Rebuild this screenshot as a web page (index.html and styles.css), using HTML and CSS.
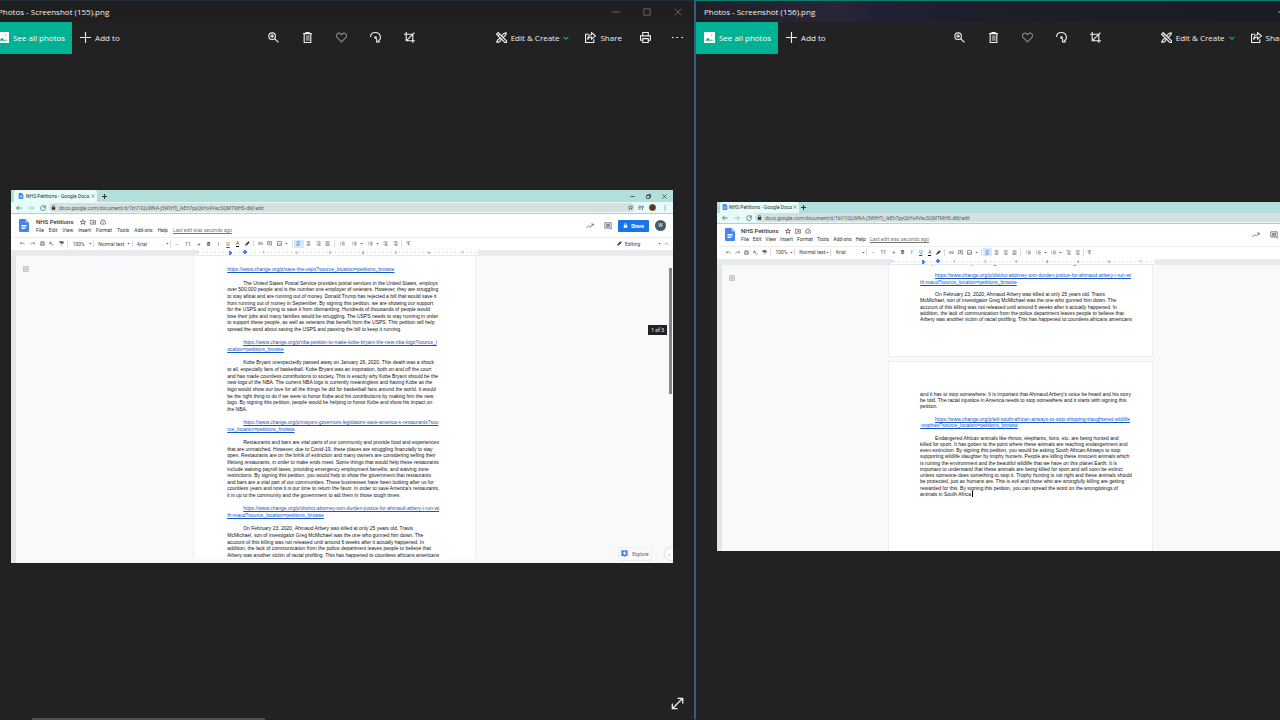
FILE: index.html
```
<!DOCTYPE html>
<html lang="en">
<head>
    <meta charset="UTF-8">
    <meta name="viewport" content="width=device-width, initial-scale=1.0">
    <title>Photos</title>
    <link rel="stylesheet" href="styles.css">
</head>
<body>
    <svg class="sprite" aria-hidden="true">
        <symbol id="picture" viewBox="0 0 20 20"><path fill="#fff" d="M0 1h20v18H0z"/><path fill="#00b294" d="M2 15l5-6 5 5 2-2 4 4v1H2zM12 4h4v4h-4z"/></symbol>
        <symbol id="plus" viewBox="0 0 20 20"><path d="M10 0v20M0 10h20"/></symbol>
        <symbol id="zoom" viewBox="0 0 20 20"><circle cx="7.500" cy="7.500" r="6"/><path d="M12 12l7 7M4 7.500h7M7.500 4v7"/></symbol>
        <symbol id="trash" viewBox="0 0 20 20"><path fill="#888" stroke="none" d="M7 6h7v10H7z"/><path d="M2 3h16M7 3V1h6v2M4 3v16h12V3"/></symbol>
        <symbol id="heart" viewBox="0 0 20 20"><path d="M10 18L2 10C-1 6 2 2 5 2c3 0 4 2 5 3 1-1 2-3 5-3 3 0 6 4 3 8z"/></symbol>
        <symbol id="rotate" viewBox="0 0 20 20"><path d="M1 9C1 4 5 1 10 1c9 0 12 11 5 15M12 12v6h6"/><circle cx="10" cy="10" r="1.500"/></symbol>
        <symbol id="crop" viewBox="0 0 20 20"><path d="M4 0v16h16M0 4h16v16M4 16L19 1"/></symbol>
        <symbol id="edit" viewBox="0 0 20 20"><path d="M1 4l3-3 15 15v3h-3zM4 7l3-3M19 1l-5 2-5 5M12 11l6-6 1-4M8 10l-3 3c-2 0-2 4-4 5 4 1 7 0 7-3l3-3"/></symbol>
        <symbol id="share" viewBox="0 0 20 20"><path d="M7 4H1v15h15v-6M12 1l7 6-7 6V9c-4 0-6 2-7 5 0-6 3-9 7-9z"/></symbol>
        <symbol id="print" viewBox="0 0 20 20"><path d="M5 7V1h10v6M5 15H1V7h18v8h-4M5 12h10v7H5z"/></symbol>
        <symbol id="dots" viewBox="0 0 20 20"><path d="M0 10h3M8 10h3M17 10h3"/></symbol>
        <symbol id="down" viewBox="0 0 20 20"><path d="M2 6l8 8 8-8"/></symbol>
        <symbol id="up" viewBox="0 0 20 20"><path d="M3 14l7-7 7 7"/></symbol>
        <symbol id="min" viewBox="0 0 20 20"><path d="M1 10h18"/></symbol>
        <symbol id="max" viewBox="0 0 20 20"><path d="M2 2h16v16H2z"/></symbol>
        <symbol id="restore" viewBox="0 0 20 20"><path d="M2 6h12v12H2zM6 6V2h12v12h-4"/></symbol>
        <symbol id="close" viewBox="0 0 20 20"><path d="M2 2l16 16M18 2L2 18"/></symbol>
        <symbol id="expand" viewBox="0 0 20 20"><path d="M2 18L18 2M10 2h8v8M2 10v8h8"/></symbol>
        <symbol id="docs" viewBox="0 0 20 26"><path fill="#4285f4" stroke="none" d="M2 0h11l7 7v17q0 2-2 2H2q-2 0-2-2V2q0-2 2-2z"/><path fill="#a1c2fa" stroke="none" d="M13 0l7 7h-7z"/><path stroke="#fff" stroke-width="2" d="M5 13h10M5 16h10M5 19h7"/></symbol>
        <symbol id="back" viewBox="0 0 20 20"><path d="M19 10H2M9 3l-7 7 7 7"/></symbol>
        <symbol id="forward" viewBox="0 0 20 20"><path d="M1 10h17M11 3l7 7-7 7"/></symbol>
        <symbol id="reload" viewBox="0 0 20 20"><path d="M16 5a8 8 0 1 0 2 6M18 1v7h-7"/></symbol>
        <symbol id="lock" viewBox="0 0 20 20"><path fill="currentColor" d="M4 9h12v9H4z"/><path d="M6 9V5a4 4 0 0 1 8 0v4"/></symbol>
        <symbol id="star" viewBox="0 0 20 20"><path d="M10 2l2 6h7l-5 4 2 6-6-4-6 4 2-6-5-4h7z"/></symbol>
        <symbol id="queue" viewBox="0 0 20 20"><path d="M1 4h18M1 9h10M1 14h8M15 17V7h4"/></symbol>
        <symbol id="kebab" viewBox="0 0 20 20"><path d="M10 1v4M10 8v4M10 15v4"/></symbol>
        <symbol id="folder" viewBox="0 0 20 20"><path d="M1 4h7l2 2h9v11H1zM7 11h6M11 9l3 2-3 3"/></symbol>
        <symbol id="cloud" viewBox="0 0 20 20"><path d="M5 17a4 4 0 0 1 0-9 5 5 0 0 1 10 0 4 4 0 0 1 0 9zM7 12l2 2 4-4"/></symbol>
        <symbol id="trend" viewBox="0 0 20 20"><path d="M1 15l6-6 4 4 7-8M13 5h5v5"/></symbol>
        <symbol id="comment" viewBox="0 0 20 20"><path d="M2 2h16v16l-3-3H2zM5 6h10M5 9h10M5 12h10"/></symbol>
        <symbol id="undo" viewBox="0 0 20 20"><path d="M2 5v6h6M3 11c5-6 12-5 15 3"/></symbol>
        <symbol id="redo" viewBox="0 0 20 20"><path d="M18 5v6h-6M17 11C12 5 5 6 2 14"/></symbol>
        <symbol id="spell" viewBox="0 0 20 20"><path d="M1 13L6 2l5 11M3 9h6M9 15l3 3 7-7"/></symbol>
        <symbol id="roller" viewBox="0 0 20 20"><path fill="currentColor" d="M3 2h12v5H3z"/><path d="M15 4h3v6H9v9"/></symbol>
        <symbol id="pen" viewBox="0 0 20 20"><path fill="currentColor" d="M2 18l2-7L14 2l4 4-9 9z"/></symbol>
        <symbol id="link" viewBox="0 0 20 20"><path d="M9 6H5a4 4 0 0 0 0 8h4M11 6h4a4 4 0 0 1 0 8h-4M6 10h8"/></symbol>
        <symbol id="addcomment" viewBox="0 0 20 20"><path d="M2 2h16v16l-4-3H2zM10 5v7M7 8h7"/></symbol>
        <symbol id="image" viewBox="0 0 20 20"><path d="M2 2h16v16H2zM4 15l4-5 3 3 2-3 4 5"/></symbol>
        <symbol id="left" viewBox="0 0 20 20"><path d="M2 3h16M2 8h10M2 13h16M2 18h10"/></symbol>
        <symbol id="center" viewBox="0 0 20 20"><path d="M2 3h16M5 8h10M2 13h16M5 18h10"/></symbol>
        <symbol id="right" viewBox="0 0 20 20"><path d="M2 3h16M8 8h10M2 13h16M8 18h10"/></symbol>
        <symbol id="justify" viewBox="0 0 20 20"><path d="M2 3h16M2 8h16M2 13h16M2 18h16"/></symbol>
        <symbol id="list" viewBox="0 0 20 20"><path d="M1 4h3M1 10h3M1 16h3M7 4h12M7 10h12M7 16h12"/></symbol>
        <symbol id="clear" viewBox="0 0 20 20"><path d="M3 3h14M12 3l-4 14M3 5l13 13"/></symbol>
        <symbol id="outline" viewBox="0 0 20 20"><path d="M2 2h16v16H2zM5 7h10M5 10h10M5 13h10"/></symbol>
        <symbol id="caret" viewBox="0 0 20 20"><path fill="currentColor" stroke="none" d="M2 6h16l-8 9z"/></symbol>
        <symbol id="explore" viewBox="0 0 20 20"><path fill="#4285f4" stroke="none" d="M1 1h18v16h-6l-3 3-3-3H1z"/><path fill="#fff" stroke="none" d="M10 3l2 4 4 2-4 2-2 4-2-4-4-2 4-2z"/></symbol>
    </svg>

    <!-- parts both windows share -->
    <template id="window-controls">
        <div class="controls">
            <button aria-label="Minimize"><svg><use href="#min"/></svg></button>
            <button aria-label="Maximize"><svg><use href="#max"/></svg></button>
            <button aria-label="Close"><svg><use href="#close"/></svg></button>
        </div>
    </template>

    <template id="photo-toolbar">
        <nav class="toolbar">
            <div class="group">
                <button class="see-all"><svg><use href="#picture"/></svg>See all photos</button>
                <button class="labelled"><svg><use href="#plus"/></svg>Add to</button>
            </div>
            <div class="group">
                <button class="tool" aria-label="Zoom"><svg><use href="#zoom"/></svg></button>
                <button class="tool" aria-label="Delete"><svg><use href="#trash"/></svg></button>
                <button class="tool dim" aria-label="Favorite"><svg><use href="#heart"/></svg></button>
                <button class="tool" aria-label="Rotate"><svg><use href="#rotate"/></svg></button>
                <button class="tool" aria-label="Crop"><svg><use href="#crop"/></svg></button>
            </div>
            <div class="group end">
                <button class="labelled"><svg><use href="#edit"/></svg>Edit &amp; Create<svg class="chevron"><use href="#down"/></svg></button>
                <button class="labelled"><svg><use href="#share"/></svg>Share</button>
                <button class="tool" aria-label="Print"><svg><use href="#print"/></svg></button>
                <button class="tool" aria-label="More"><svg><use href="#dots"/></svg></button>
            </div>
        </nav>
    </template>

    <template id="browser-head">
        <div class="tabs">
            <div class="tab"><svg><use href="#docs"/></svg><span>NHS Petitions - Google Docs</span><button aria-label="Close tab"><svg><use href="#close"/></svg></button></div>
            <button class="new-tab" aria-label="New tab"><svg><use href="#plus"/></svg></button>
            <div class="tab-controls">
                <button aria-label="Minimize browser"><svg><use href="#min"/></svg></button>
                <button aria-label="Restore browser"><svg><use href="#restore"/></svg></button>
                <button aria-label="Close browser"><svg><use href="#close"/></svg></button>
            </div>
        </div>
        <div class="address">
            <button aria-label="Back"><svg><use href="#back"/></svg></button>
            <button class="faded" aria-label="Forward"><svg><use href="#forward"/></svg></button>
            <button aria-label="Reload"><svg><use href="#reload"/></svg></button>
            <div class="pill">
                <svg><use href="#lock"/></svg>
                <input type="text" aria-label="Address" value="docs.google.com/document/d/1bV1lQLWNA-j5WIHTj_ikEh7pyQbYs4VecSQMTMHS-dM/edit">
                <svg><use href="#star"/></svg>
            </div>
            <button aria-label="Media"><svg><use href="#queue"/></svg></button>
            <button aria-label="Profile"><span class="face"></span></button>
            <button aria-label="Menu"><svg><use href="#kebab"/></svg></button>
        </div>
        <div class="doc-head">
            <svg class="logo"><use href="#docs"/></svg>
            <div class="names">
                <div class="name-row"><h2>NHS Petitions</h2><svg><use href="#star"/></svg><svg><use href="#folder"/></svg><svg><use href="#cloud"/></svg></div>
                <div class="menu"><button>File</button><button>Edit</button><button>View</button><button>Insert</button><button>Format</button><button>Tools</button><button>Add-ons</button><button>Help</button><a href="#history">Last edit was seconds ago</a></div>
            </div>
            <div class="head-right">
                <svg><use href="#trend"/></svg>
                <svg><use href="#comment"/></svg>
                <button class="share"><svg><use href="#lock"/></svg>Share</button>
                <span class="avatar">W</span>
            </div>
        </div>
        <div class="format">
            <button aria-label="Undo"><svg><use href="#undo"/></svg></button>
            <button aria-label="Redo"><svg><use href="#redo"/></svg></button>
            <button aria-label="Print document"><svg><use href="#print"/></svg></button>
            <button aria-label="Spelling"><svg><use href="#spell"/></svg></button>
            <button aria-label="Paint format"><svg><use href="#roller"/></svg></button>
            <i></i>
            <label class="pick zoom-pick"><select aria-label="Zoom level"><option>100%</option></select><svg><use href="#caret"/></svg></label>
            <i></i>
            <label class="pick style-pick"><select aria-label="Style"><option>Normal text</option></select><svg><use href="#caret"/></svg></label>
            <i></i>
            <label class="pick font-pick"><select aria-label="Font"><option>Arial</option></select><svg><use href="#caret"/></svg></label>
            <i></i>
            <button aria-label="Smaller">−</button>
            <input type="text" aria-label="Font size" value="11">
            <button aria-label="Larger">+</button>
            <button><b>B</b></button>
            <button><em>I</em></button>
            <button><u>U</u></button>
            <button><span class="color">A</span></button>
            <button aria-label="Highlight"><svg><use href="#pen"/></svg></button>
            <i></i>
            <button aria-label="Link"><svg><use href="#link"/></svg></button>
            <button aria-label="Comment"><svg><use href="#addcomment"/></svg></button>
            <button class="wide" aria-label="Image"><svg><use href="#image"/></svg><svg class="tiny"><use href="#caret"/></svg></button>
            <i></i>
            <button class="active" aria-label="Align left"><svg><use href="#left"/></svg></button>
            <button aria-label="Align center"><svg><use href="#center"/></svg></button>
            <button aria-label="Align right"><svg><use href="#right"/></svg></button>
            <button aria-label="Justify"><svg><use href="#justify"/></svg></button>
            <i></i>
            <button class="spacing" aria-label="Line spacing"><svg><use href="#list"/></svg></button>
            <button class="wide" aria-label="Numbered list"><svg><use href="#list"/></svg><svg class="tiny"><use href="#caret"/></svg></button>
            <button class="wide" aria-label="Bulleted list"><svg><use href="#list"/></svg><svg class="tiny"><use href="#caret"/></svg></button>
            <button aria-label="Outdent"><svg><use href="#right"/></svg></button>
            <button aria-label="Indent"><svg><use href="#right"/></svg></button>
            <i></i>
            <button aria-label="Clear formatting"><svg><use href="#clear"/></svg></button>
            <div class="rest"></div>
            <button class="mode"><svg><use href="#pen"/></svg>Editing<svg class="tiny"><use href="#caret"/></svg></button>
            <button aria-label="Hide menus"><svg><use href="#up"/></svg></button>
        </div>
        <div class="ruler"><div class="scale"><span>1</span><span class="mark"></span><span>1</span><span>2</span><span>3</span><span>4</span><span>5</span><span>6</span><span>7</span></div></div>
    </template>

    <main class="desktop">
        <!-- first photo -->
        <section class="window">
            <header class="titlebar">
                <h1>Photos - Screenshot (155).png</h1>
                <div data-part="window-controls"></div>
            </header>
            <div data-part="photo-toolbar"></div>
            <div class="stage">
                <article class="shot">
                    <div data-part="browser-head"></div>
                    <div class="paper">
                        <svg class="outline"><use href="#outline"/></svg>
                        <div class="page">
                            <a href="#usps" class="flush">https://www.change.org/p/save-the-usps?source_location=petitions_browse</a>
                            <p>The United States Postal Service provides postal services in the United States, employs<br>over 500,000 people and is the number one employer of veterans. However, they are struggling<br>to stay afloat and are running out of money. Donald Trump has rejected a bill that would save it<br>from running out of money in September. By signing this petition, we are showing our support<br>for the USPS and trying to save it from dismantling. Hundreds of thousands of people would<br>lose their jobs and many families would be struggling. The USPS needs to stay running in order<br>to support these people, as well as veterans that benefit from the USPS. This petition will help<br>spread the word about saving the USPS and passing the bill to keep it running.</p>
                            <a href="#nba">https://www.change.org/p/nba-petition-to-make-kobe-bryant-the-new-nba-logo?source_l<br>ocation=petitions_browse</a>
                            <p>Kobe Bryant unexpectedly passed away on January 26, 2020. This death was a shock<br>to all, especially fans of basketball. Kobe Bryant was an inspiration, both on and off the court<br>and has made countless contributions to society. This is exactly why Kobe Bryant should be the<br>new logo of the NBA. The current NBA logo is currently meaningless and having Kobe as the<br>logo would show our love for all the things he did for basketball fans around the world. It would<br>be the right thing to do if we were to honor Kobe and his contributions by making him the new<br>logo. By signing this petition, people would be helping to honor Kobe and show his impact on<br>the NBA.</p>
                            <a href="#restaurants">https://www.change.org/p/mayors-governors-legislators-save-america-s-restaurants?sou<br>rce_location=petitions_browse</a>
                            <p>Restaurants and bars are vital parts of our community and provide food and experiences<br>that are unmatched. However, due to Covid-19, these places are struggling financially to stay<br>open. Restaurants are on the brink of extinction and many owners are considering selling their<br>lifelong restaurants, in order to make ends meet. Some things that would help these restaurants<br>include waiving payroll taxes, providing emergency employment benefits, and waiving zone<br>restrictions. By signing this petition, you would help to show the government that restaurants<br>and bars are a vital part of our communities. These businesses have been looking after us for<br>countless years and now it is our time to return the favor. In order to save America's restaurants,<br>it is up to the community and the government to aid them in those tough times.</p>
                            <a href="#arbery">https://www.change.org/p/district-attorney-tom-durden-justice-for-ahmaud-arbery-i-run-wi<br>th-maud?source_location=petitions_browse</a>
                            <p>On February 23, 2020, Ahmaud Arbery was killed at only 25 years old. Travis<br>McMichael, son of investigator Greg McMichael was the one who gunned him down. The<br>account of this killing was not released until around 6 weeks after it actually happened. In<br>addition, the lack of communication from the police department leaves people to believe that<br>Arbery was another victim of racial profiling. This has happened to countless africans americans</p>
                        </div>
                        <div class="scrollbar"></div>
                        <span class="page-tip">1 of 3</span>
                        <button class="explore"><svg><use href="#explore"/></svg>Explore</button>
                        <button class="panel" aria-label="Show side panel">‹</button>
                    </div>
                </article>
            </div>
            <button class="expand" aria-label="Full screen"><svg><use href="#expand"/></svg></button>
            <div class="taskbar"></div>
        </section>

        <!-- second photo -->
        <section class="window focused">
            <header class="titlebar">
                <h1>Photos - Screenshot (156).png</h1>
                <div data-part="window-controls"></div>
            </header>
            <div data-part="photo-toolbar"></div>
            <div class="stage">
                <article class="shot small">
                    <div data-part="browser-head"></div>
                    <div class="paper">
                        <svg class="outline"><use href="#outline"/></svg>
                        <div class="page first">
                            <p class="flush">it is up to the community and the government to aid them in those tough times.</p>
                            <a href="#arbery">https://www.change.org/p/district-attorney-tom-durden-justice-for-ahmaud-arbery-i-run-wi<br>th-maud?source_location=petitions_browse</a>
                            <p>On February 23, 2020, Ahmaud Arbery was killed at only 25 years old. Travis<br>McMichael, son of investigator Greg McMichael was the one who gunned him down. The<br>account of this killing was not released until around 6 weeks after it actually happened. In<br>addition, the lack of communication from the police department leaves people to believe that<br>Arbery was another victim of racial profiling. This has happened to countless africans americans</p>
                        </div>
                        <div class="page second">
                            <p class="flush">and it has to stop somewhere. It is important that Ahmaud Arbery's voice be heard and his story<br>be told. The racial injustice in America needs to stop somewhere and it starts with signing this<br>petition.</p>
                            <a href="#wildlife">https://www.change.org/p/tell-south-african-airways-to-stop-shipping-slaughtered-wildlife<br>-trophies?source_location=petitions_browse</a>
                            <p>Endangered African animals like rhinos, elephants, lions, etc. are being hunted and<br>killed for sport. It has gotten to the point where these animals are reaching endangerment and<br>even extinction. By signing this petition, you would be asking South African Airways to stop<br>supporting wildlife slaughter by trophy hunters. People are killing these innocent animals which<br>is ruining the environment and the beautiful wildlife that we have on this planet Earth. It is<br>important to understand that these animals are being killed for sport and will soon be extinct<br>unless someone does something to stop it. Trophy hunting is not right and these animals should<br>be protected, just as humans are. This is evil and those who are wrongfully killing are getting<br>rewarded for this. By signing this petition, you can spread the word on the wrongdoings of<br>animals in South Africa. <span class="cursor"></span></p>
                        </div>
                    </div>
                </article>
            </div>
        </section>
    </main>

    <script>
        // Fill in the shared parts of each window
        document.querySelectorAll('[data-part]').forEach(slot => {
            const part = document.getElementById(slot.dataset.part);
            slot.replaceWith(part.content.cloneNode(true));
        });
    </script>
</body>
</html>
```
FILE: styles.css
```
:root {
    --bg: #222222;
    --green: #00b294;
    --text: #f0f0f0;
    --icon: #5f6368;
    --blue: #1a73e8;
}

* {
    box-sizing: border-box;
    margin: 0;
    padding: 0;
}

body {
    background: var(--bg);
    color: var(--text);
    font-family: "Open Sans", "Segoe UI", sans-serif;
    font-size: 8px;
    overflow: hidden;
}

button, input, select {
    font: inherit;
    color: inherit;
    background: none;
    border: none;
    min-width: 0;
}

button {
    display: flex;
    align-items: center;
    justify-content: center;
    white-space: nowrap;
}

svg {
    flex: none;
    fill: none;
    stroke: currentColor;
    stroke-width: 2;
}

.sprite {
    position: absolute;
    width: 0;
    height: 0;
}

/* both windows run past the screen edges */
.desktop {
    display: flex;
    height: 100vh;
    margin: 0 -79px 0 -10px;
}

.window {
    flex: 705 1 0;
    min-width: 0;
    display: flex;
    flex-direction: column;
    position: relative;
    border-top: 1px solid #252f38;
    border-bottom: 1px solid #102822;
}

.window.focused {
    flex-grow: 664;
    border-top-color: #0a806f;
    border-left: 2px solid #315d86;
}

.titlebar {
    display: flex;
    align-items: center;
    justify-content: space-between;
    height: 21px;
    padding-left: 8px;
    background: #1f1f1f;
}

.focused .titlebar {
    background: linear-gradient(90deg, #1e2029, #292638 22%, #1d2133 28%, #1c1f27 50%, #191c25);
}

.titlebar h1 {
    font-size: 8px;
    font-weight: 400;
}

.controls {
    display: flex;
    color: #777;
}

.focused .controls {
    color: #ddd;
}

.controls button {
    width: 31px;
}

.controls svg {
    width: 8px;
    height: 8px;
}

.toolbar {
    display: grid;
    grid-template-columns: 1fr auto 1fr;
    height: 32px;
}

.toolbar button {
    padding-bottom: 1px;
}

.group {
    display: flex;
}

.group.end {
    justify-content: flex-end;
}

.toolbar svg {
    width: 11px;
    height: 11px;
}

.toolbar .see-all, .toolbar .labelled {
    gap: 4px;
    padding: 0 7px 1px 8px;
}

.toolbar .see-all {
    background: var(--green);
    color: #fff;
}

.toolbar .end .labelled {
    padding: 0 8px 1px;
}

.tool {
    width: 34px;
}

.group.end .tool {
    width: 32px;
}

.dim {
    color: #888;
}

.toolbar .chevron {
    width: 6px;
    height: 6px;
    color: var(--green);
    stroke-width: 4;
}

.stage {
    flex: 1;
    display: flex;
    align-items: center;
    padding: 0 21px 20px;
}

.expand {
    position: absolute;
    right: 10px;
    bottom: 9px;
}

.expand svg {
    width: 13px;
    height: 13px;
}

.taskbar {
    position: absolute;
    left: 6%;
    bottom: -1px;
    width: 33%;
    height: 2px;
    background: #4a5351;
}

/* the photographed browser */
.shot {
    flex: 1;
    min-width: 0;
    aspect-ratio: 16 / 9;
    display: flex;
    flex-direction: column;
    overflow: hidden;
    background: #fff;
    color: #333;
    font-family: Roboto, sans-serif;
    font-size: 5px;
    line-height: 6px;
}

.shot svg {
    width: 6px;
    height: 6px;
}

.tabs {
    flex: none;
    display: flex;
    align-items: center;
    height: 12px;
    background: #b2dfdb;
    padding-left: 3px;
}

.tab {
    align-self: stretch;
    display: flex;
    align-items: center;
    gap: 2px;
    width: 83px;
    padding: 0 2px 0 4px;
    border-radius: 3px 3px 0 0;
    background: #e5fcfa;
}

.tab span {
    flex: 1;
    white-space: nowrap;
}

.tab button svg {
    width: 4px;
    height: 4px;
}

.new-tab {
    width: 14px;
}

.new-tab svg {
    width: 5px;
    height: 5px;
    stroke-width: 4;
}

.tab-controls {
    display: flex;
    margin-left: auto;
}

.tab-controls button {
    width: 16px;
}

.tab-controls svg {
    width: 5px;
    height: 5px;
    stroke-width: 3;
}

.address {
    flex: none;
    display: flex;
    align-items: center;
    height: 12px;
    padding: 0 2px;
    background: #e5fcfa;
    border-bottom: 1px solid #b7cccb;
}

.address button {
    width: 12px;
}

.address .faded {
    color: #8ba3a1;
}

.pill {
    flex: 1;
    display: flex;
    align-items: center;
    gap: 3px;
    height: 9px;
    padding: 0 2px;
    border-radius: 5px;
    background: #d5e0df;
}

.pill svg {
    width: 5px;
    height: 5px;
}

.pill input {
    flex: 1;
    color: #56605f;
}

.face {
    width: 7px;
    height: 7px;
    border-radius: 50%;
    background: radial-gradient(#4d392a 40%, #c5a15b);
}

.doc-head {
    flex: none;
    display: flex;
    align-items: center;
    height: 23px;
    padding: 0 7px 0 8px;
    gap: 7px;
}

.doc-head .logo {
    width: 10px;
    height: 13px;
}

.names {
    flex: 1;
    display: flex;
    flex-direction: column;
    gap: 1px;
}

.name-row {
    display: flex;
    align-items: center;
    gap: 4px;
    height: 8px;
}

.name-row h2 {
    font-size: 6px;
    font-weight: 500;
    margin-right: 2px;
}

.menu {
    display: flex;
    gap: 5px;
    white-space: nowrap;
}

.menu a {
    color: #777;
}

.head-right {
    display: flex;
    align-items: center;
    gap: 10px;
    color: var(--icon);
}

.head-right svg {
    width: 8px;
    height: 8px;
}

.head-right .share {
    gap: 3px;
    width: 31px;
    height: 12px;
    margin-left: -4px;
    border-radius: 1px;
    background: var(--blue);
    color: #fff;
    font-weight: 700;
}

.head-right .share svg {
    width: 5px;
    height: 5px;
}

.avatar {
    width: 11px;
    height: 11px;
    border-radius: 50%;
    background: #455a64;
    color: #fff;
    line-height: 11px;
    text-align: center;
    margin-left: -4px;
}

/* cells share the row by weight */
.format {
    flex: none;
    display: flex;
    align-items: center;
    height: 13px;
    padding: 0 2px 1px 7px;
    border-top: 1px solid #eceef0;
    color: #444;
}

.format button {
    flex: 20 1 0;
    height: 8px;
}

.format svg {
    width: 5px;
    height: 5px;
}

.format svg.tiny, .pick svg {
    width: 3px;
    height: 3px;
}

.format i {
    flex: 7 1 0;
    height: 7px;
    background: linear-gradient(#dadce0, #dadce0) center / 1px 100% no-repeat;
}

.format input {
    flex: 26 1 0;
    width: 0;
    text-align: center;
}

.format .wide {
    flex-grow: 33;
    gap: 3px;
}

.format .spacing {
    flex-grow: 27;
}

.format .active {
    background: #d9e7fd;
    color: var(--blue);
}

.color {
    border-bottom: 1px solid #000;
}

.format .pick {
    display: flex;
    align-items: center;
    min-width: 0;
}

.pick select {
    flex: 1;
    width: 0;
    padding-left: 3px;
    appearance: none;
}

.zoom-pick {
    flex: 46 1 0;
}

.style-pick {
    flex: 73 1 0;
}

.font-pick {
    flex: 72 1 0;
}

.rest {
    flex: 422 1 0;
}

.format .mode {
    flex-grow: 92;
    gap: 3px;
}

.mode .tiny {
    margin-left: auto;
}

.ruler {
    flex: none;
    height: 6px;
    padding-left: 28%;
    background: #e8eaed;
}

.scale {
    display: flex;
    width: 59%;
    height: 5px;
    background: #fff repeating-linear-gradient(90deg, #fff 0 3px, #ccc 3px 4px) 0 2px / 100% 1px no-repeat;
    color: #666;
    font-size: 4px;
    line-height: 5px;
}

.scale span {
    flex: 2 1 0;
}

.scale span:last-child {
    flex-grow: 1;
}

.scale .mark {
    background: radial-gradient(circle at 1px 3px, #4285f4 2px, transparent 2px), radial-gradient(circle at 16px 2px, #4285f4 2px, transparent 2px);
}

.paper {
    flex: 1;
    min-height: 0;
    position: relative;
    overflow: hidden;
    background: #f8f9fa;
    border-left: 5px solid #e4e6e9;
}

.outline {
    position: absolute;
    left: 7px;
    top: 10px;
    color: #999;
}

.page {
    width: 43%;
    margin-left: 27%;
    padding: 10px 0 0 5%;
    background: #fff;
    border: solid #eceef0;
    border-width: 0 1px;
    color: #111;
    font-family: "Liberation Sans", Arial, sans-serif;
    font-size: 5px;
    line-height: 1.33;
    white-space: nowrap;
}

.page p, .page a {
    display: block;
    text-indent: 16px;
    margin-bottom: 1.33em;
}

.page a {
    color: #1155cc;
}

.page .flush {
    text-indent: 0;
}

.scrollbar {
    position: absolute;
    right: 1px;
    top: 12px;
    width: 3px;
    height: 41%;
    background: #80868b;
}

.page-tip {
    position: absolute;
    right: 6px;
    top: 69px;
    padding: 2px 3px;
    background: #222;
    color: #fff;
}

.explore {
    position: absolute;
    right: 21px;
    bottom: 2px;
    gap: 4px;
    width: 34px;
    height: 14px;
    border: 1px solid #eee;
    border-radius: 2px;
    background: #f9f9f9;
    color: #666;
}

.explore svg {
    width: 7px;
    height: 7px;
}

.panel {
    position: absolute;
    right: -4px;
    bottom: 3px;
    width: 12px;
    height: 12px;
    padding-right: 4px;
    border-radius: 50%;
    background: #fff;
    box-shadow: 0 0 2px #aaa;
}

/* second photo is shown a little smaller */
.small .tabs, .small .address {
    height: 11px;
}

.small .tab {
    width: 79px;
    gap: 1px;
    padding: 0 2px;
}

.small .new-tab {
    width: 10px;
}

.small .doc-head {
    height: 22px;
    gap: 6px;
    padding-right: 6px;
}

.small .menu {
    gap: 4px;
}

.small .page {
    line-height: 1.25;
}

.small .page p, .small .page a {
    text-indent: 15px;
    margin-bottom: 1.25em;
}

.small .page .flush {
    text-indent: 0;
}

.small .first {
    height: 97px;
    margin-top: -5px;
    padding-top: 0;
    border-bottom-width: 1px;
}

.small .second {
    height: 100%;
    margin-top: 4px;
    padding-top: 29px;
    border-top-width: 1px;
}

.cursor {
    border-left: 1px solid #000;
}
```
